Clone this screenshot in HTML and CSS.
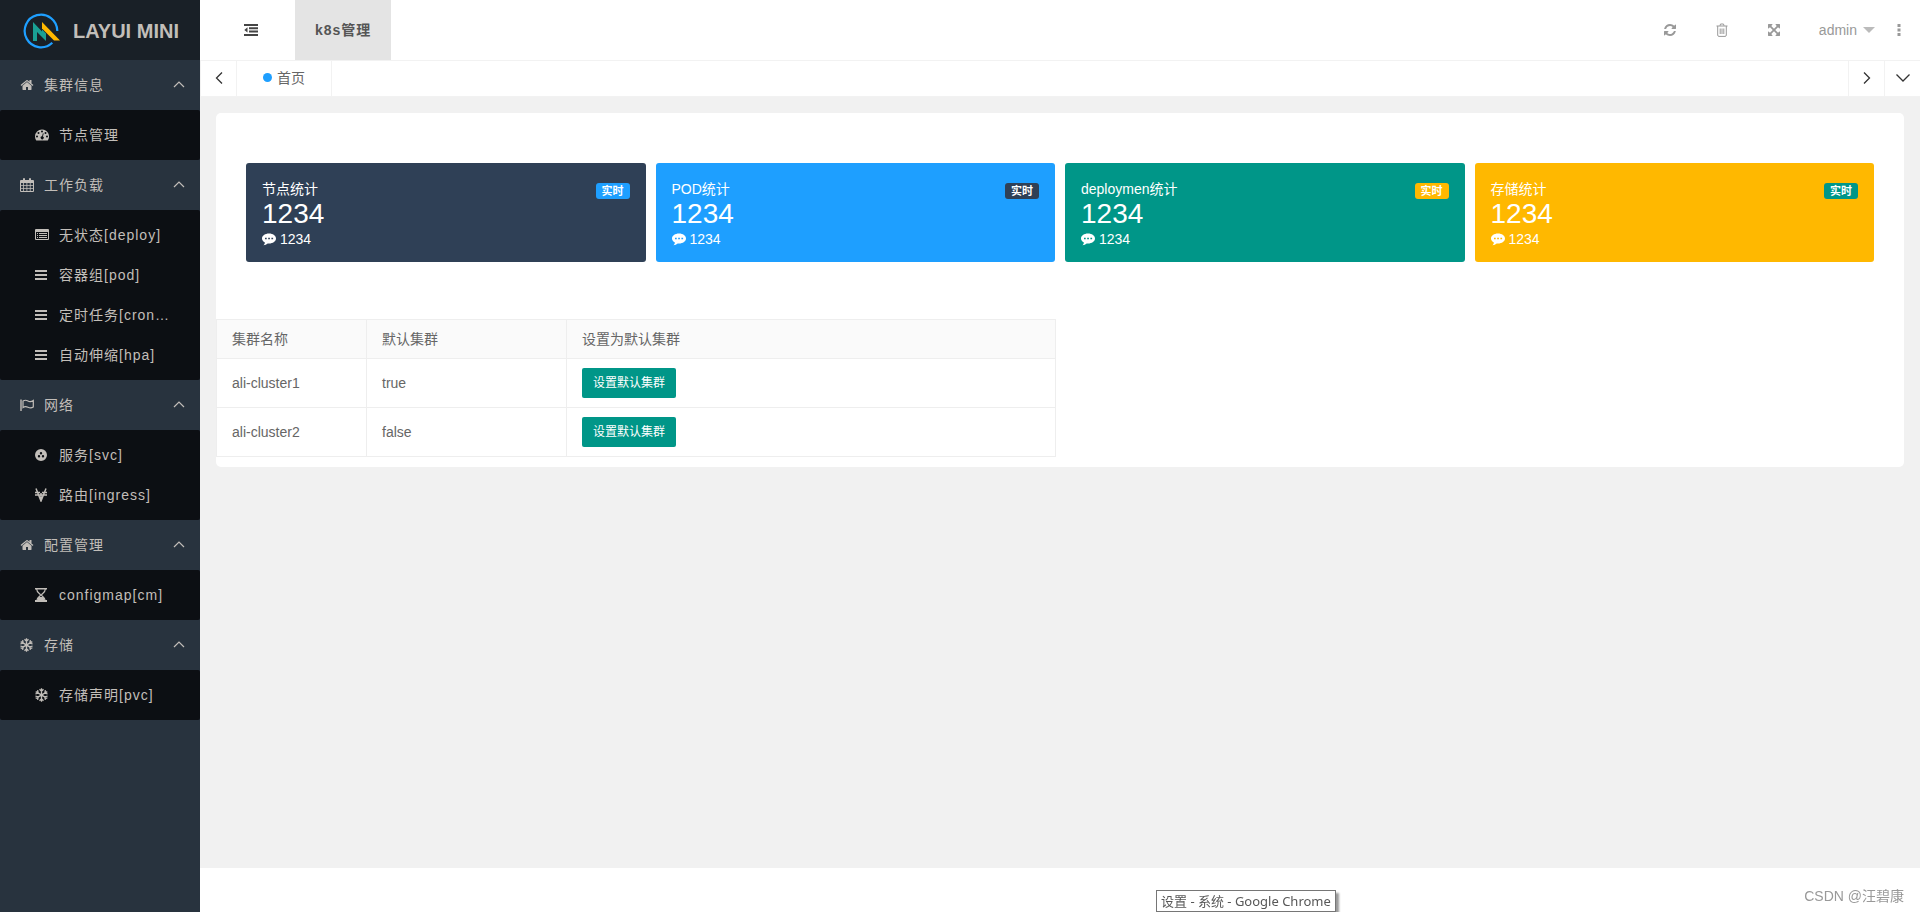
FILE: index.html
```html
<!DOCTYPE html>
<html lang="zh-CN">
<head>
<meta charset="utf-8">
<title>k8s管理</title>
<link rel="stylesheet" href="styles.css">
</head>
<body>
<svg class="sprite" aria-hidden="true">
  <symbol id="home" viewBox="0 0 1792 1792"><path d="M1472 992v480q0 26-19 45t-45 19h-384v-384h-256v384h-384q-26 0-45-19t-19-45v-480q0-1 .5-3t.5-3l575-474 575 474q1 2 1 6zm223-69l-62 74q-8 9-21 11h-3q-13 0-21-7l-692-577-692 577q-12 8-24 7-13-2-21-11l-62-74q-8-10-7-23.5t11-21.5l719-599q32-26 76-26t76 26l244 204v-195q0-14 9-23t23-9h192q14 0 23 9t9 23v408l219 182q10 8 11 21.5t-7 23.5z"/></symbol>
  <symbol id="gauge" viewBox="0 0 14 14"><path fill-rule="evenodd" d="M7 1.500a7 7 0 0 0-7 7c0 1.300.4 2.600 1.100 3.700q.2.300.500.300h10.800q.3 0 .5-.3A7 7 0 0 0 7 1.500zM2 7.500a1 1 0 1 1 0 2 1 1 0 0 1 0-2zM3.500 4a1 1 0 1 1 0 2 1 1 0 0 1 0-2zM7 2.500a1 1 0 1 1 0 2 1 1 0 0 1 0-2zM10.500 4a1 1 0 1 1 0 2 1 1 0 0 1 0-2zM12 7.500a1 1 0 1 1 0 2 1 1 0 0 1 0-2zM7.900 5.200l.8.200-.8 3.100a1.500 1.500 0 1 1-.8-.2z"/></symbol>
  <symbol id="calendar" viewBox="0 0 14 14"><path fill-rule="evenodd" d="M1 2h2V1q0-1 1-1t1 1v1h4V1q0-1 1-1t1 1v1h2q1 0 1 1v10q0 1-1 1H1q-1 0-1-1V3q0-1 1-1zM1 5v2h2.200V5zm3 0v2h2.500V5zm3.300 0v2h2.500V5zm3.300 0v2H13V5zM1 7.800V10h2.200V7.800zm3 0V10h2.500V7.800zm3.300 0V10h2.500V7.800zm3.300 0V10H13V7.800zM1 10.800V13h2.200v-2.200zm3 0V13h2.500v-2.200zm3.300 0V13h2.500v-2.200zm3.300 0V13H13v-2.200z"/></symbol>
  <symbol id="list" viewBox="0 0 14 14"><path fill-rule="evenodd" d="M1 1h12q1 0 1 1v9q0 1-1 1H1q-1 0-1-1V2q0-1 1-1zM1 4v7h12V4zM2 5h1v1H2zm2 0h8v1H4zM2 7h1v1H2zm2 0h8v1H4zM2 9h1v1H2zm2 0h8v1H4z"/></symbol>
  <symbol id="bars" viewBox="0 0 14 14"><path d="M0 2h12v2H0zm0 4h12v2H0zm0 4h12v2H0z"/></symbol>
  <symbol id="flag" viewBox="0 0 14 14"><path d="M1 1.500v11.500" fill="none" stroke="currentColor" stroke-width="1.400"/><path d="M3 3q2.500-1.500 5 0t5.300-.5v6.500q-2.500 1.500-5.300.200T3 9.500z" fill="none" stroke="currentColor" stroke-width="1.200"/></symbol>
  <symbol id="service" viewBox="0 0 14 14"><path fill-rule="evenodd" d="M6 1a6 6 0 1 1 0 12A6 6 0 0 1 6 1zm0 3a1.200 1.200 0 1 0 0 2.400A1.200 1.200 0 0 0 6 4zM4 7a1.200 1.200 0 1 0 0 2.400A1.200 1.200 0 0 0 4 7zm4 0a1.200 1.200 0 1 0 0 2.400A1.200 1.200 0 0 0 8 7z"/></symbol>
  <symbol id="route" viewBox="0 0 14 14"><path d="M1 .5L6 13 11 .5M6 5v7M0 4.500h5M7 4.500h5M0 7h12" fill="none" stroke="currentColor" stroke-width="1.500"/></symbol>
  <symbol id="hourglass" viewBox="0 0 14 14"><path d="M0 0h12v1.500H0zM0 12h12v2H0z"/><path d="M1.700 1C1.700 5 5.500 5.500 5.500 7S1.700 9 1.700 13M10.300 1C10.300 5 6.500 5.500 6.500 7s3.800 2 3.800 6" fill="none" stroke="currentColor" stroke-width="1.200"/><path d="M2 12.500Q2.500 9.500 4.300 9h3.400Q9.500 9.500 10 12.500z"/></symbol>
  <symbol id="snow" viewBox="0 0 14 14"><path d="M6.500.2v13.600M.7 3.600l11.600 6.800M12.300 3.600L.7 10.400M4.500 1.300l2 2 2-2M4.500 12.700l2-2 2 2M.4 6l2.800-1L2.600 2.200M12.600 6l-2.800-1 .6-2.800M.4 8l2.800 1-.6 2.800M12.600 8l-2.800 1 .6 2.800" fill="none" stroke="currentColor" stroke-width="1.300"/></symbol>
  <symbol id="up" viewBox="0 0 12 10"><path d="M1 7l5-5 5 5" fill="none" stroke="currentColor" stroke-width="1.200"/></symbol>
  <symbol id="outdent" viewBox="0 0 14 12"><path d="M0 0h14v2H0zm5 3.300h9v2H5zm0 3.300h9v2H5zM0 10h14v2H0zM3.500 3.300v5.300L.3 6z"/></symbol>
  <symbol id="refresh" viewBox="0 0 1792 1792"><path d="M1639 1056q0 5-1 7-64 268-268 434.500t-478 166.500q-146 0-282.500-55t-243.500-157l-129 129q-19 19-45 19t-45-19-19-45v-448q0-26 19-45t45-19h448q26 0 45 19t19 45-19 45l-137 137q71 66 161 102t187 36q134 0 250-65t186-179q11-17 53-117 8-23 30-23h192q13 0 22.500 9.500t9.500 22.500zm25-800v448q0 26-19 45t-45 19h-448q-26 0-45-19t-19-45 19-45l138-138q-148-137-349-137-134 0-250 65t-186 179q-11 17-53 117-8 23-30 23h-199q-13 0-22.500-9.500t-9.500-22.500v-7q65-268 270-434.500t480-166.500q146 0 284 55.500t245 156.500l130-129q19-19 45-19t45 19 19 45z"/></symbol>
  <symbol id="trash" viewBox="0 0 14 14"><path d="M1.500 3h11M5 2.800L5.500 1h3l.5 1.800M2.700 3v9q0 1.400 1.200 1.400h6.200q1.200 0 1.200-1.400V3M5.200 5.500v5.500M7 5.500v5.500M8.800 5.500v5.500" fill="none" stroke="currentColor"/></symbol>
  <symbol id="expand" viewBox="0 0 1792 1792"><path d="M1411 541l-355 355 355 355 144-144q29-31 70-14 39 17 39 59v448q0 26-19 45t-45 19h-448q-42 0-59-40-17-39 14-69l144-144-355-355-355 355 144 144q31 30 14 69-17 40-59 40h-448q-26 0-45-19t-19-45v-448q0-42 40-59 39-17 69 14l144 144 355-355-355-355-144 144q-19 19-45 19-12 0-24-5-40-17-40-59v-448q0-26 19-45t45-19h448q42 0 59 40 17 39-14 69l-144 144 355 355 355-355-144-144q-31-30-14-69 17-40 59-40h448q26 0 45 19t19 45v448q0 42-39 59-13 5-25 5-26 0-45-19z"/></symbol>
  <symbol id="dots" viewBox="0 0 4 12"><path d="M.5 0h3v3h-3zm0 4.500h3v3h-3zm0 4.500h3v3h-3z"/></symbol>
  <symbol id="left" viewBox="0 0 8 14"><path d="M7 1.500L1.500 7 7 12.500" fill="none" stroke="currentColor" stroke-width="1.300"/></symbol>
  <symbol id="right" viewBox="0 0 8 14"><path d="M1 1.500L6.500 7 1 12.500" fill="none" stroke="currentColor" stroke-width="1.300"/></symbol>
  <symbol id="down" viewBox="0 0 14 8"><path d="M.5.500L7 7 13.500.500" fill="none" stroke="currentColor" stroke-width="1.300"/></symbol>
  <symbol id="comment" viewBox="0 0 14 14"><path fill-rule="evenodd" d="M7 1.500c4 0 7 2.200 7 5s-3 5-7 5l-1.300-.1Q4 13 1.500 13.300q1.400-1.200 1.400-2.700C1.200 9.700 0 8.200 0 6.500c0-2.800 3-5 7-5zM3 5.700v1.600h1.700V5.700zm3.200 0v1.600h1.700V5.700zm3.200 0v1.600h1.700V5.700z"/></symbol>
</svg>

<div class="app">
  <aside class="sidebar">
    <a class="brand" href="#">
      <svg class="brand-logo" viewBox="0 0 38 36"><path d="M34.300 18a16.300 16.300 0 1 0-5 11.700" fill="none" stroke="#1e9fff" stroke-width="2.200"/><path d="M10 9l9 9.500v-2l4 4V28l-9-9v9h-4z" fill="#1aa094"/><path d="M19 9l18 18.500h-6L19 15.500z" fill="#ffb800"/></svg>
      <span>LAYUI MINI</span>
    </a>
    <nav>
      <a class="group" href="#"><svg class="icon"><use href="#home"/></svg><span class="label">集群信息</span><svg class="fold"><use href="#up"/></svg></a>
      <div class="children">
        <a href="#"><svg class="icon"><use href="#gauge"/></svg><span class="label">节点管理</span></a>
      </div>
      <a class="group" href="#"><svg class="icon"><use href="#calendar"/></svg><span class="label">工作负载</span><svg class="fold"><use href="#up"/></svg></a>
      <div class="children">
        <a href="#"><svg class="icon"><use href="#list"/></svg><span class="label">无状态[deploy]</span></a>
        <a href="#"><svg class="icon"><use href="#bars"/></svg><span class="label">容器组[pod]</span></a>
        <a href="#"><svg class="icon"><use href="#bars"/></svg><span class="label">定时任务[cron…</span></a>
        <a href="#"><svg class="icon"><use href="#bars"/></svg><span class="label">自动伸缩[hpa]</span></a>
      </div>
      <a class="group" href="#"><svg class="icon"><use href="#flag"/></svg><span class="label">网络</span><svg class="fold"><use href="#up"/></svg></a>
      <div class="children">
        <a href="#"><svg class="icon"><use href="#service"/></svg><span class="label">服务[svc]</span></a>
        <a href="#"><svg class="icon"><use href="#route"/></svg><span class="label">路由[ingress]</span></a>
      </div>
      <a class="group" href="#"><svg class="icon"><use href="#home"/></svg><span class="label">配置管理</span><svg class="fold"><use href="#up"/></svg></a>
      <div class="children">
        <a href="#"><svg class="icon"><use href="#hourglass"/></svg><span class="label">configmap[cm]</span></a>
      </div>
      <a class="group" href="#"><svg class="icon"><use href="#snow"/></svg><span class="label">存储</span><svg class="fold"><use href="#up"/></svg></a>
      <div class="children">
        <a href="#"><svg class="icon"><use href="#snow"/></svg><span class="label">存储声明[pvc]</span></a>
      </div>
    </nav>
  </aside>

  <div class="body">
    <header class="topbar">
      <button class="collapse" aria-label="折叠菜单"><svg class="outdent"><use href="#outdent"/></svg></button>
      <a class="module" href="#">k8s管理</a>
      <div class="tools">
        <button class="tool" aria-label="刷新"><svg class="icon"><use href="#refresh"/></svg></button>
        <button class="tool" aria-label="清理"><svg class="icon"><use href="#trash"/></svg></button>
        <button class="tool" aria-label="全屏"><svg class="icon"><use href="#expand"/></svg></button>
        <button class="tool user">admin<span class="caret"></span></button>
        <button class="tool more" aria-label="更多"><svg class="dots"><use href="#dots"/></svg></button>
      </div>
    </header>
    <div class="tabs">
      <button class="tab-btn first" aria-label="向左"><svg class="side"><use href="#left"/></svg></button>
      <a class="tab" href="#"><span class="dot"></span>首页</a>
      <button class="tab-btn" aria-label="向右"><svg class="side"><use href="#right"/></svg></button>
      <button class="tab-btn" aria-label="展开"><svg class="down"><use href="#down"/></svg></button>
    </div>
    <main class="content">
      <section class="panel">
        <div class="stats">
          <div class="stat navy"><div class="stat-head"><span>节点统计</span><span class="badge blue">实时</span></div><div class="num">1234</div><div class="sub"><svg class="icon"><use href="#comment"/></svg>1234</div></div>
          <div class="stat blue"><div class="stat-head"><span>POD统计</span><span class="badge navy">实时</span></div><div class="num">1234</div><div class="sub"><svg class="icon"><use href="#comment"/></svg>1234</div></div>
          <div class="stat green"><div class="stat-head"><span>deploymen统计</span><span class="badge orange">实时</span></div><div class="num">1234</div><div class="sub"><svg class="icon"><use href="#comment"/></svg>1234</div></div>
          <div class="stat orange"><div class="stat-head"><span>存储统计</span><span class="badge green">实时</span></div><div class="num">1234</div><div class="sub"><svg class="icon"><use href="#comment"/></svg>1234</div></div>
        </div>
        <table class="clusters">
          <colgroup><col class="c-name"><col class="c-default"><col></colgroup>
          <thead><tr><th>集群名称</th><th>默认集群</th><th>设置为默认集群</th></tr></thead>
          <tbody>
            <tr><td>ali-cluster1</td><td>true</td><td><button class="set">设置默认集群</button></td></tr>
            <tr><td>ali-cluster2</td><td>false</td><td><button class="set">设置默认集群</button></td></tr>
          </tbody>
        </table>
      </section>
    </main>
    <footer class="footer"></footer>
  </div>
</div>
<div class="tooltip">设置 - 系统 - Google Chrome</div>
<div class="watermark">CSDN @汪碧康</div>
</body>
</html>
```

FILE: styles.css
```css
* { box-sizing: border-box; }
body {
  margin: 0;
  font: 14px/24px "Liberation Sans", "Noto Sans CJK SC", sans-serif;
  color: #666;
}
a { color: inherit; text-decoration: none; }
button {
  margin: 0;
  padding: 0;
  border: 0;
  background: none;
  font: inherit;
  color: inherit;
  cursor: pointer;
}
svg { display: block; fill: currentColor; flex: none; }
.sprite { position: absolute; width: 0; height: 0; }
.icon { width: 14px; height: 14px; }

.app { display: flex; min-height: 100vh; }

/* Sidebar */
.sidebar { flex: none; width: 200px; background: #28333e; color: #c2beb9; }
.brand {
  display: flex;
  align-items: center;
  gap: 12px;
  height: 60px;
  padding: 2px 0 0 23px;
  background: #192027;
  font-size: 20px;
  font-weight: bold;
  white-space: nowrap;
}
.brand-logo { width: 38px; height: 36px; }
.group, .children a {
  display: flex;
  align-items: center;
  letter-spacing: 1px;
}
.group { height: 50px; padding: 0 15px 0 20px; gap: 10px; }
.children { padding: 5px 0; background: #0c0f13; border-radius: 2px; }
.children a { height: 40px; padding: 0 20px 0 35px; gap: 10px; }
.label { flex: 1; min-width: 0; white-space: nowrap; }
.fold { width: 12px; height: 10px; }

/* Top bar */
.body { flex: 1; min-width: 0; display: flex; flex-direction: column; }
.topbar { display: flex; height: 60px; background: #fff; }
.collapse {
  display: flex;
  align-items: center;
  justify-content: center;
  width: 95px;
  padding-left: 6px;
  color: #444;
}
.outdent { width: 14px; height: 12px; }
.module {
  display: flex;
  align-items: center;
  padding: 0 20px;
  background: #e4e4e4;
  color: #555;
  font-weight: bold;
  letter-spacing: 1px;
}
.tools { display: flex; margin-left: auto; color: #999; }
.tool { display: flex; align-items: center; padding: 0 19px; }
.user { gap: 6px; padding-right: 3px; }
.caret {
  border: 6px solid transparent;
  border-top-color: #bbb;
  border-bottom: 0;
}
.dots { width: 4px; height: 12px; }

/* Tabs */
.tabs {
  display: flex;
  height: 37px;
  background: #fff;
  border: 1px solid #f2f2f2;
  border-right: 0;
}
.tab-btn, .tab {
  display: flex;
  align-items: center;
  padding-bottom: 2px;
}
.tab-btn {
  justify-content: center;
  width: 36px;
  border-left: 1px solid #f2f2f2;
  color: #333;
}
.tab-btn.first { border-left: 0; border-right: 1px solid #f2f2f2; }
.tab {
  gap: 5px;
  padding-left: 26px;
  padding-right: 26px;
  margin-right: auto;
  border-right: 1px solid #f2f2f2;
}
.dot { width: 9px; height: 9px; border-radius: 50%; background: #1e9fff; }
.side { width: 8px; height: 14px; }
.down { width: 14px; height: 8px; }

/* Content */
.content { flex: 1; padding: 16px; background: #f1f1f1; }
.panel { padding-bottom: 10px; background: #fff; border-radius: 5px; }
.stats {
  display: grid;
  grid-template-columns: repeat(4, 1fr);
  gap: 10px;
  padding: 50px 30px 57px;
}
.stat {
  height: 99px;
  padding: 16px;
  border-radius: 3px;
  color: #fff;
}
.stat-head {
  display: flex;
  align-items: flex-end;
  justify-content: space-between;
  height: 20px;
  line-height: 20px;
}
.badge {
  width: 34px;
  border-radius: 3px;
  font-size: 11px;
  line-height: 16px;
  font-weight: bold;
  text-align: center;
}
.num { font-size: 28px; line-height: 30px; }
.sub { display: flex; align-items: center; gap: 4px; line-height: 20px; }
.navy { background: #2f4056; }
.blue { background: #1e9fff; }
.green { background: #009688; }
.orange { background: #ffb800; }

.clusters { width: 840px; max-width: 100%; border-collapse: collapse; table-layout: fixed; }
.c-name { width: 150px; }
.c-default { width: 200px; }
.clusters th, .clusters td {
  height: 49px;
  padding: 0 15px;
  border: 1px solid #eee;
  text-align: left;
  font-weight: normal;
}
.clusters th { height: 39px; background: #fafafa; }
.set {
  display: block;
  height: 30px;
  padding: 0 11px;
  border-radius: 2px;
  background: #009688;
  color: #fff;
  font-size: 12px;
}

.footer { height: 44px; background: #fff; }

/* Overlays */
.tooltip {
  position: fixed;
  left: 1156px;
  bottom: 0;
  padding: 0 4px;
  border: 1px solid #767676;
  background: #fff;
  box-shadow: 3px 3px 2px #999;
  color: #575757;
  font: 13px/20px "Noto Sans", "Noto Sans CJK SC", sans-serif;
}
.watermark {
  position: fixed;
  right: 16px;
  bottom: 4px;
  color: #999;
}
```
